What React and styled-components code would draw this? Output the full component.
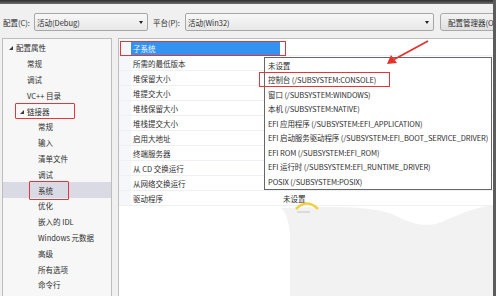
import React from 'react';
import styled, { createGlobalStyle } from 'styled-components';

const GlobalStyle = createGlobalStyle`
  html, body {
    margin: 0;
    padding: 0;
    background: #f0f0f0;
  }
  body {
    font-family: "Noto Sans CJK SC", "Noto Sans", sans-serif;
    font-size: 7.5px;
    color: #2e2e2e;
    overflow: hidden;
  }
`;

const Window = styled.div`
  position: relative;
  width: 496px;
  height: 296px;
  box-sizing: border-box;
  overflow: hidden;
  display: flex;
  flex-direction: column;
  background: #f0f0f0;
  border-right: 3px solid #5c5c5c;
`;

const TitleStrip = styled.div`
  height: 4px;
  background: linear-gradient(#2c2c2c, #6e6e6e);
`;

const Toolbar = styled.div`
  display: flex;
  align-items: center;
  height: 18px;
  margin-top: 9px;
  padding-left: 3px;
`;

const Label = styled.span`
  flex-shrink: 0;
  width: ${(p) => p.$width}px;
  margin-left: ${(p) => p.$gap || 0}px;
  white-space: nowrap;
`;

const Combo = styled.div`
  position: relative;
  flex-shrink: 0;
  box-sizing: border-box;
  width: ${(p) => p.$width}px;
  height: 18px;
  display: flex;
  align-items: center;
  padding-left: 2px;
  border: 1px solid #a7a7a7;
  border-radius: 2px;
  background: linear-gradient(#f8f8f8, #e7e7e7);
  &::after {
    content: '';
    position: absolute;
    right: 4px;
    top: 7px;
    border-left: 2.5px solid transparent;
    border-right: 2.5px solid transparent;
    border-top: 3px solid #222;
  }
`;

const ToolButton = styled.div`
  box-sizing: border-box;
  flex: 1;
  min-width: 0;
  overflow: hidden;
  height: 18px;
  margin-left: 6px;
  margin-right: -6px;
  display: flex;
  align-items: center;
  padding-left: 7px;
  border: 1px solid #a9a9a9;
  border-radius: 3px;
  background: linear-gradient(#f4f4f4, #dfdfdf);
  white-space: nowrap;
`;

const Main = styled.div`
  flex: 1;
  display: flex;
  gap: 6px;
  margin-top: 7px;
  padding-left: 2px;
`;

const TreePanel = styled.div`
  width: 110px;
  flex-shrink: 0;
  box-sizing: border-box;
  padding-top: 1px;
  border: 1px solid #bdbdbd;
  border-bottom: none;
  background: #f7f7f7;
`;

const TreeRow = styled.div`
  position: relative;
  height: 15.8px;
  display: flex;
  align-items: center;
  padding-left: ${(p) => p.$pad}px;
  background: ${(p) => (p.$selected ? '#d9dae3' : 'transparent')};
  white-space: nowrap;
  ${(p) =>
    p.$mark &&
    `&::after {
      content: '';
      position: absolute;
      left: ${p.$mark[0]}px;
      width: ${p.$mark[1]}px;
      top: ${p.$mark[2]}px;
      bottom: ${p.$mark[3]}px;
      border: 1.5px solid #e2363a;
      border-radius: 1px;
    }`}
`;

const Expander = styled.span`
  width: 7px;
  height: 100%;
  display: flex;
  align-items: center;
  &::before {
    content: '';
    display: ${(p) => (p.$open ? 'block' : 'none')};
    width: 0;
    height: 0;
    border-left: 4px solid transparent;
    border-bottom: 4px solid #3a3a3a;
    margin-top: 1px;
  }
`;

const Grid = styled.div`
  position: relative;
  flex: 1;
  box-sizing: border-box;
  padding-top: 2px;
  border: 1px solid #bdbdbd;
  border-right: none;
  border-bottom: none;
  background: #fff;
`;

const GridRow = styled.div`
  position: relative;
  display: grid;
  grid-template-columns: 12px 149px 1fr;
  height: 15px;
  box-sizing: border-box;
  border-bottom: 1px solid #eef0f4;
  ${(p) =>
    p.$mark &&
    `&::after {
      content: '';
      position: absolute;
      left: 1px;
      width: 166px;
      top: 0;
      height: 15px;
      border: 1.5px solid #e2363a;
      box-sizing: border-box;
    }`}
`;

const Gutter = styled.div`
  background: #f6f7fb;
`;

const NameCell = styled.div`
  display: flex;
  align-items: center;
  padding-left: 2px;
  background: ${(p) => (p.$selected ? '#3492f0' : 'transparent')};
  color: ${(p) => (p.$selected ? '#f4f8ff' : 'inherit')};
  white-space: nowrap;
`;

const ValueCell = styled.div`
  display: flex;
  align-items: center;
  padding-left: 3px;
  white-space: nowrap;
`;

const Dropdown = styled.div`
  position: absolute;
  left: 145px;
  top: 18px;
  width: 228px;
  box-sizing: border-box;
  border: 1px solid #676767;
  background: #fff;
  z-index: 2;
`;

const Option = styled.div`
  position: relative;
  height: 14.5px;
  display: flex;
  align-items: center;
  padding-left: 3px;
  white-space: nowrap;
  letter-spacing: -0.1px;
  ${(p) =>
    p.$mark &&
    `&::after {
      content: '';
      position: absolute;
      left: -6px;
      width: 131px;
      top: -1px;
      height: 15px;
      border: 1.5px solid #e2363a;
      box-sizing: border-box;
    }`}
`;

const Overlay = styled.svg`
  position: absolute;
  left: 0;
  top: 0;
  pointer-events: none;
  z-index: 5;
`;

const tree = [
  { text: '配置属性', pad: 6, open: true },
  { text: '常规', pad: 17 },
  { text: '调试', pad: 17 },
  { text: 'VC++ 目录', pad: 17 },
  { text: '链接器', pad: 17, open: true, mark: [12, 58, 0, 0] },
  { text: '常规', pad: 28 },
  { text: '输入', pad: 28 },
  { text: '清单文件', pad: 28 },
  { text: '调试', pad: 28 },
  { text: '系统', pad: 28, selected: true, mark: [26, 38, -1, -2] },
  { text: '优化', pad: 28 },
  { text: '嵌入的 IDL', pad: 28 },
  { text: 'Windows 元数据', pad: 28 },
  { text: '高级', pad: 28 },
  { text: '所有选项', pad: 28 },
  { text: '命令行', pad: 28 },
];

const props = [
  { name: '子系统', selected: true, mark: true },
  { name: '所需的最低版本' },
  { name: '堆保留大小' },
  { name: '堆提交大小' },
  { name: '堆栈保留大小' },
  { name: '堆栈提交大小' },
  { name: '启用大地址' },
  { name: '终端服务器' },
  { name: '从 CD 交换运行' },
  { name: '从网络交换运行' },
  { name: '驱动程序', value: '未设置' },
];

const options = [
  '未设置',
  '控制台 (/SUBSYSTEM:CONSOLE)',
  '窗口 (/SUBSYSTEM:WINDOWS)',
  '本机 (/SUBSYSTEM:NATIVE)',
  'EFI 应用程序 (/SUBSYSTEM:EFI_APPLICATION)',
  'EFI 启动服务驱动程序 (/SUBSYSTEM:EFI_BOOT_SERVICE_DRIVER)',
  'EFI ROM (/SUBSYSTEM:EFI_ROM)',
  'EFI 运行时 (/SUBSYSTEM:EFI_RUNTIME_DRIVER)',
  'POSIX (/SUBSYSTEM:POSIX)',
];

export default function App() {
  return (
    <>
      <GlobalStyle />
      <Window>
        <TitleStrip />
        <Toolbar>
          <Label $width={31}>配置(C):</Label>
          <Combo $width={114}>活动(Debug)</Combo>
          <Label $width={32} $gap={5}>平台(P):</Label>
          <Combo $width={249}>活动(Win32)</Combo>
          <ToolButton>配置管理器(O)...</ToolButton>
        </Toolbar>
        <Main>
          <TreePanel>
            {tree.map((item, i) => (
              <TreeRow key={i} $pad={item.pad} $selected={item.selected} $mark={item.mark}>
                <Expander $open={item.open} />
                {item.text}
              </TreeRow>
            ))}
          </TreePanel>
          <Grid>
            {props.map((p, i) => (
              <GridRow key={i} $mark={p.mark}>
                <Gutter />
                <NameCell $selected={p.selected}>{p.name}</NameCell>
                <ValueCell>{p.value}</ValueCell>
              </GridRow>
            ))}
            <Dropdown>
              {options.map((o, i) => (
                <Option key={i} $mark={i === 1}>
                  {o}
                </Option>
              ))}
            </Dropdown>
          </Grid>
        </Main>
        <Overlay width="496" height="296" viewBox="0 0 496 296">
          <path
            d="M281 208 C330 206 372 206 392 214 C408 222 424 229 442 222 C460 214 476 207 496 205 L496 296 L290 296 L290 236 C289 222 286 212 281 208 Z"
            fill="#f2f2f2"
          />
          <path d="M296 209 Q307 198 318 209" stroke="#f2cf3c" strokeWidth="2.5" fill="none" />
          <path d="M297 212 L310 212" stroke="#9a9a9a" strokeWidth="1" opacity="0.5" />
          <line x1="428" y1="41" x2="393" y2="60" stroke="#e5322d" strokeWidth="1.8" />
          <polygon points="387,64 391,55 397,63" fill="#e5322d" />
        </Overlay>
      </Window>
    </>
  );
}
